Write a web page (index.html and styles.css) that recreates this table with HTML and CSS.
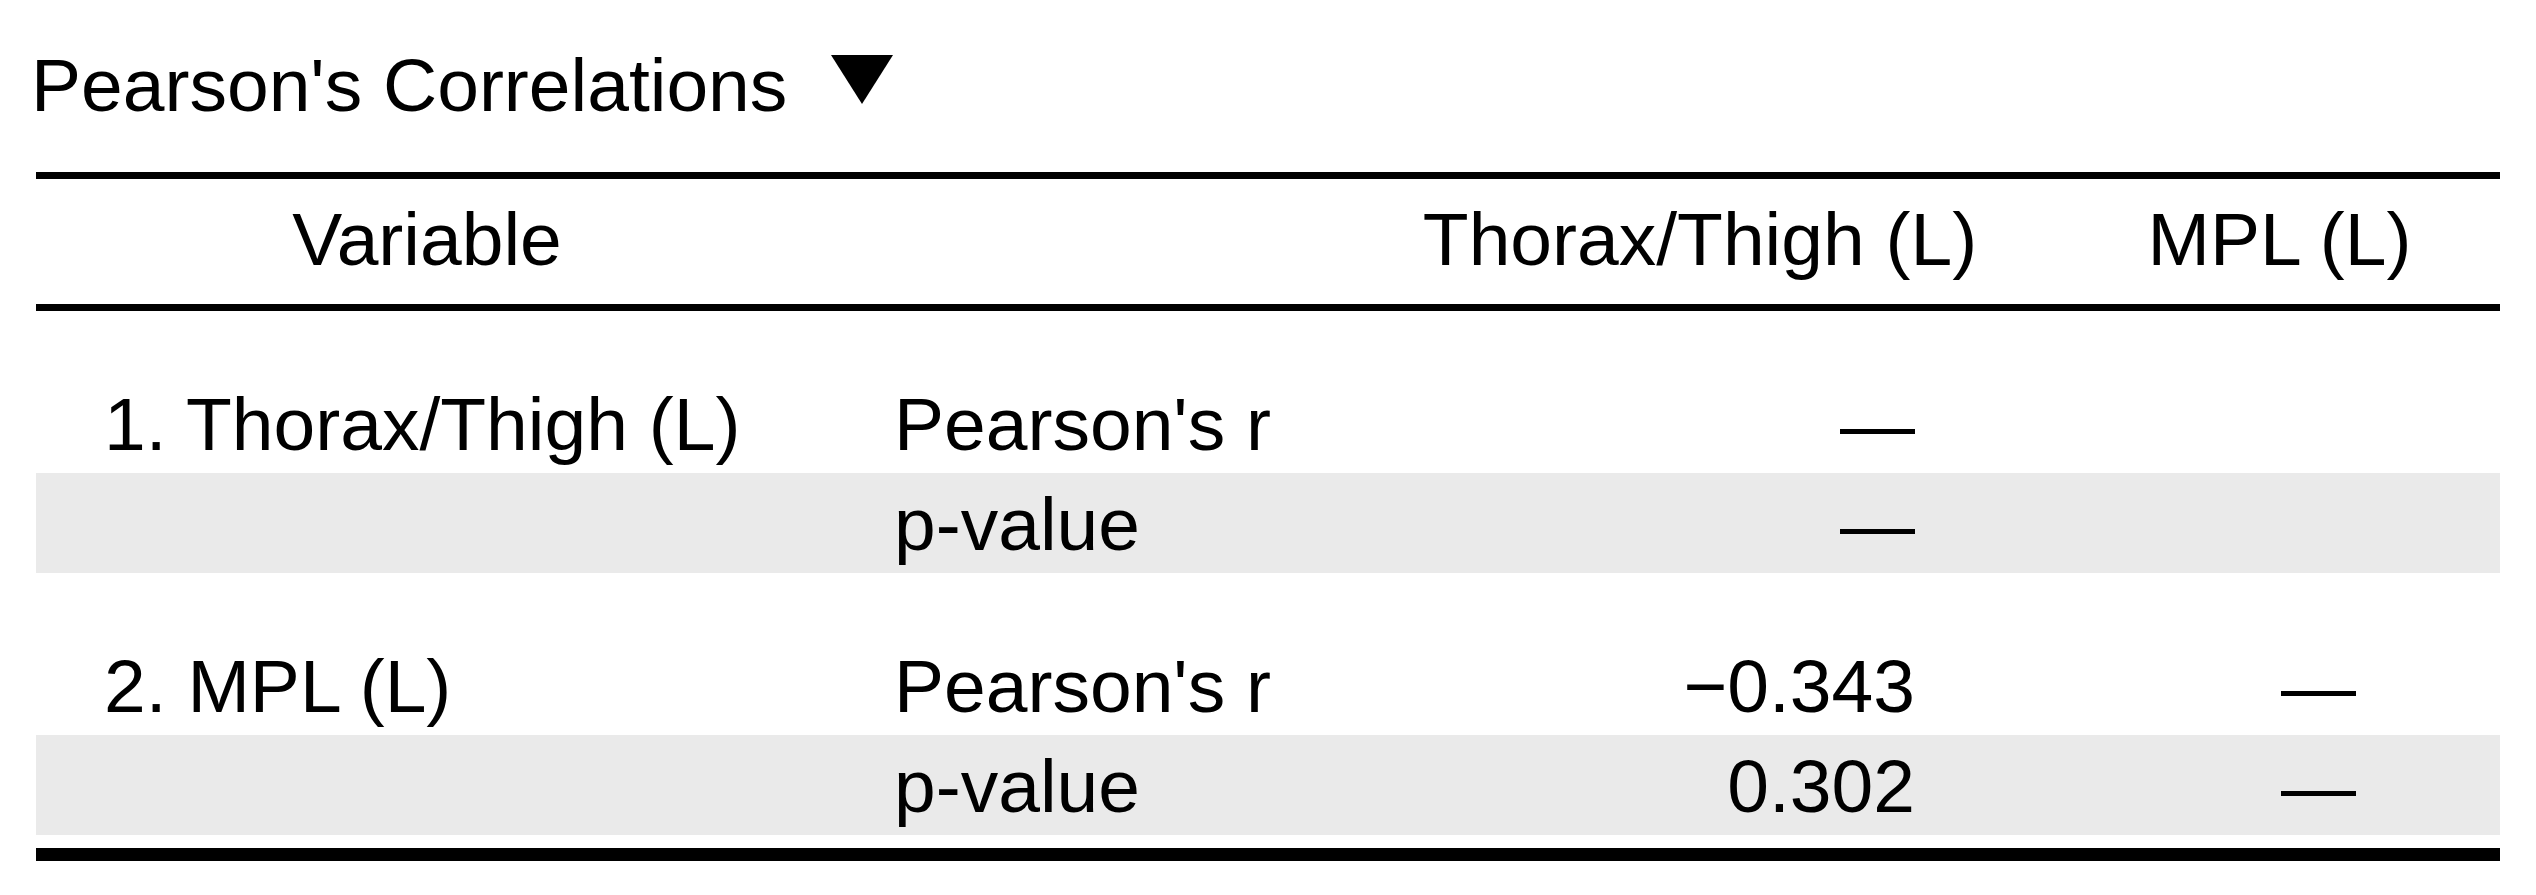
FILE: index.html
```html
<!DOCTYPE html>
<html lang="en">
<head>
<meta charset="utf-8">
<title>Pearson's Correlations</title>
<link rel="stylesheet" href="styles.css">
</head>
<body>
<div class="result">
  <div class="title">
    <span class="title-text">Pearson's Correlations</span>
    <svg class="toggle" width="62" height="49" viewBox="0 0 62 49" aria-hidden="true"><polygon points="0,0 62,0 31,49" fill="#000"/></svg>
  </div>
  <table class="corr">
    <colgroup>
      <col class="c1"><col class="c2"><col class="c3"><col class="c4">
    </colgroup>
    <thead>
      <tr>
        <th class="h-var">Variable</th>
        <th class="h-blank"></th>
        <th class="h-num">Thorax/Thigh (L)</th>
        <th class="h-num">MPL (L)</th>
      </tr>
    </thead>
    <tbody>
      <tr class="spacer"><td colspan="4"></td></tr>
      <tr class="row">
        <td class="var">1. Thorax/Thigh (L)</td>
        <td class="stat">Pearson's r</td>
        <td class="num">—</td>
        <td class="num"></td>
      </tr>
      <tr class="row alt">
        <td class="var"></td>
        <td class="stat">p-value</td>
        <td class="num">—</td>
        <td class="num"></td>
      </tr>
      <tr class="spacer"><td colspan="4"></td></tr>
      <tr class="row">
        <td class="var">2. MPL (L)</td>
        <td class="stat">Pearson's r</td>
        <td class="num">−0.343</td>
        <td class="num">—</td>
      </tr>
      <tr class="row alt">
        <td class="var"></td>
        <td class="stat">p-value</td>
        <td class="num">0.302</td>
        <td class="num">—</td>
      </tr>
      <tr class="end"><td colspan="4"></td></tr>
    </tbody>
  </table>
</div>
</body>
</html>
```

FILE: styles.css
```css
html, body {
  margin: 0;
  padding: 0;
  background: #ffffff;
}

body {
  font-family: "Liberation Sans", Arial, sans-serif;
  font-size: 75px;
  color: #000000;
}

.result {
  padding-top: 42px;
}

.title {
  display: flex;
  align-items: flex-start;
  padding-left: 31px;
  line-height: 86px;
  height: 86px;
}

.title-text {
  white-space: nowrap;
}

.toggle {
  display: block;
  margin-left: 44px;
  margin-top: 13px;
}

.corr {
  margin-left: 36px;
  margin-top: 44px;
  width: 2464px;
  table-layout: fixed;
  border-collapse: separate;
  border-spacing: 0;
}

.c1 { width: 782px; }
.c2 { width: 523px; }
.c3 { width: 718px; }
.c4 { width: 441px; }

.corr th {
  font-weight: normal;
  text-align: center;
  padding: 0 0 4px 0;
  line-height: 121px;
  border-top: 7px solid #000;
  border-bottom: 7px solid #000;
  white-space: nowrap;
}

.corr td {
  padding: 3px 0 0 0;
  line-height: 97px;
  white-space: nowrap;
}

.corr .var {
  padding-left: 68px;
  text-align: left;
}

.corr .stat {
  padding-left: 76px;
  text-align: left;
}

.corr .num {
  text-align: right;
  padding-right: 144px;
}

.row.alt td {
  background: #eaeaea;
}

.spacer td {
  height: 62px;
  padding: 0;
  line-height: 0;
  font-size: 0;
}

.end td {
  height: 13px;
  padding: 0;
  line-height: 0;
  font-size: 0;
  border-bottom: 13px solid #000;
}
```
